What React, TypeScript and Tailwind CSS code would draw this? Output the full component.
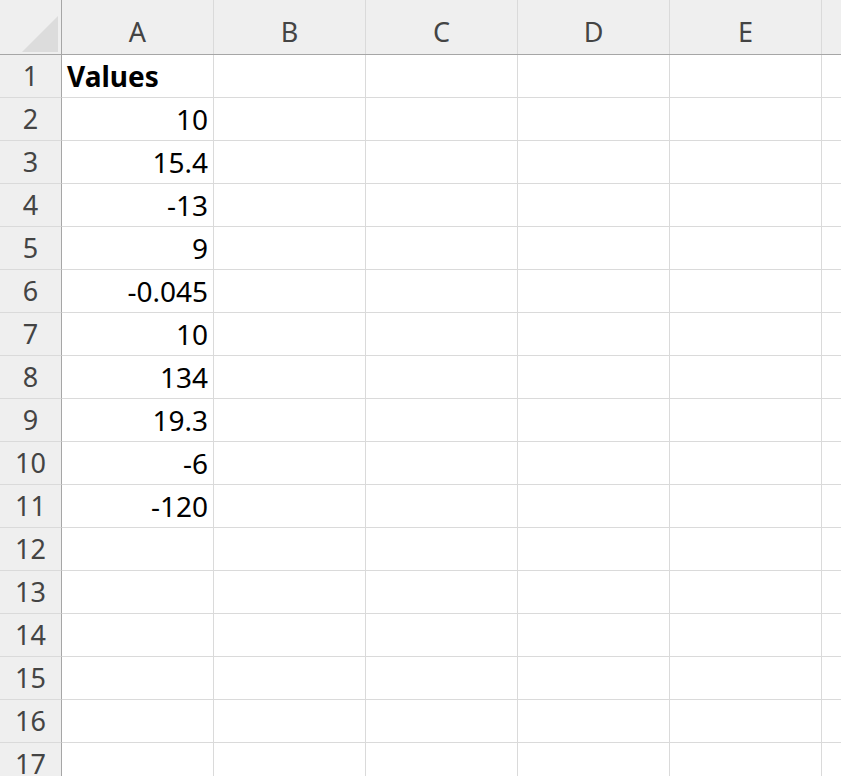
import React from "react";

const vals = ["Values","10","15.4","-13","9","-0.045","10","134","19.3","-6","-120","","","","","",""];
const cols = ["A","B","C","D","E",""];

export default function App() {
  return (
    <div className="w-[841px] h-[776px] overflow-hidden bg-white" style={{ fontFamily: '"Noto Sans","Open Sans",sans-serif' }}>
      <div className="flex h-[55px] bg-[#efefef] border-b border-[#a6a6a6]">
        <div className="w-[62px] shrink-0 border-r border-[#a6a6a6] relative">
          <svg className="absolute left-[22px] top-[16px]" width="36" height="36" viewBox="0 0 36 36"><polygon points="36,0 36,36 0,36" fill="#dcdcdc" /></svg>
        </div>
        {cols.map((c, i) => (
          <div key={i} className="w-[152px] shrink-0 border-r border-[#dadada] flex items-center justify-center pt-[10px] text-[27px] text-[#444]">{c}</div>
        ))}
      </div>
      {vals.map((v, r) => (
        <div key={r} className="flex h-[43px]">
          <div className="w-[62px] shrink-0 bg-[#efefef] border-r border-[#a6a6a6] border-b border-b-[#dadada] flex items-center justify-center text-[27px] text-[#444]">{r + 1}</div>
          {cols.map((_, i) => (
            <div key={i} className={`w-[152px] shrink-0 border-r border-b border-[#dadada] flex items-center px-[5px] text-[28px] text-black ${r === 0 ? "justify-start font-bold" : "justify-end"}`}>{i === 0 ? v : ""}</div>
          ))}
        </div>
      ))}
    </div>
  );
}
